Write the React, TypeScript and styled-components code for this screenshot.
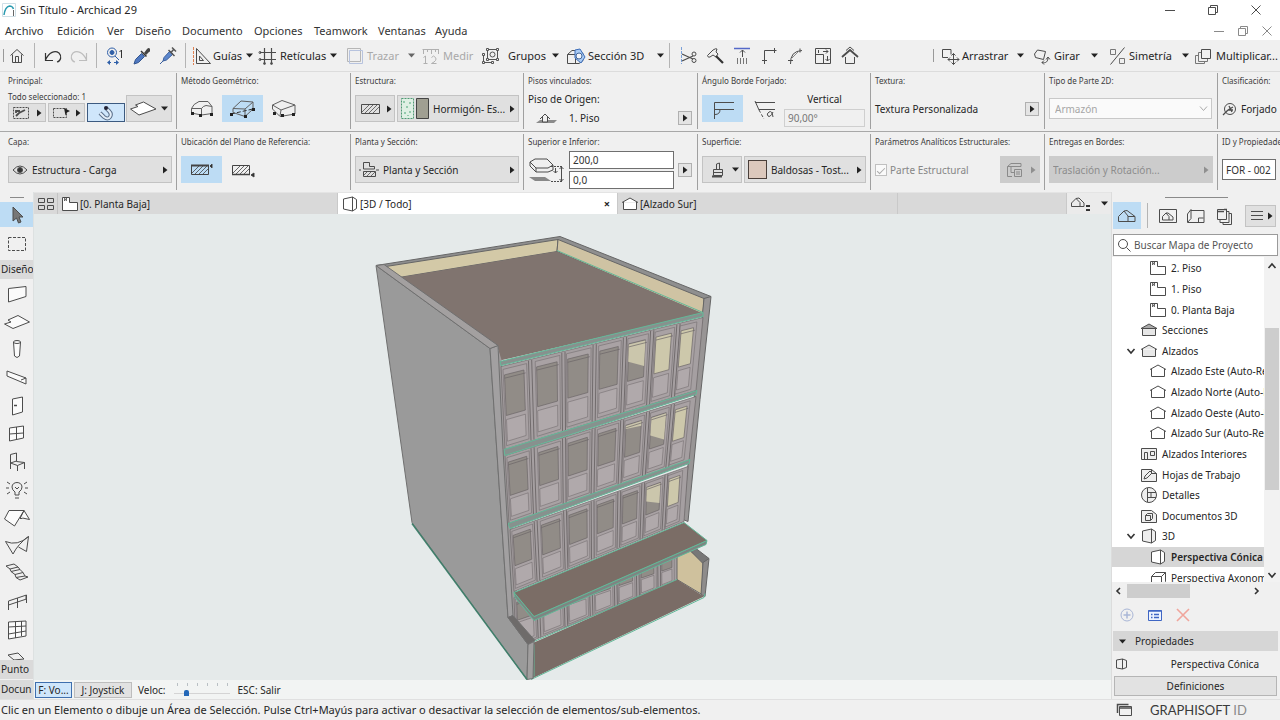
import React from 'react';
import styled, { createGlobalStyle, css } from 'styled-components';

const Global = createGlobalStyle`
  * { box-sizing: border-box; }
  body { margin: 0; background: #f0f0f0; color: #262626; font: 10px/14px "Noto Sans", "Open Sans", sans-serif; overflow: hidden; }
  button, input, select { font: inherit; color: inherit; margin: 0; }
  button { padding: 0; border: 0; background: none; display: flex; align-items: center; }
  svg { display: block; flex: none; }
  h1, h2, ul { margin: 0; padding: 0; font: inherit; list-style: none; }
`;

/* ---------- icons ---------- */
type IconProps = { w?: number; h?: number; color?: string; children: React.ReactNode };
const Icon = ({ w = 22, h = 20, color = '#4c4c4c', children }: IconProps) => (
  <svg width={w} height={h} viewBox={`0 0 ${w} ${h}`} fill="none" stroke={color} strokeWidth="1" aria-hidden="true">
    {children}
  </svg>
);
const Arrow = ({ color = '#222' }: { color?: string }) => (
  <svg width="5" height="8" viewBox="0 0 5 8" fill={color} aria-hidden="true"><path d="M0 0.5 4.5 4 0 7.5z" /></svg>
);
const Caret = ({ color = '#222' }: { color?: string }) => (
  <svg width="7" height="5" viewBox="0 0 7 5" fill={color} aria-hidden="true"><path d="M0 .5h7L3.500 4.500z" /></svg>
);

const HomeIcon = () => <Icon w={18}><path d="M2.500 9.500 9 3.500l6.500 6M4.500 8.500v8h9v-8M7.500 16.500v-6h3v6" /></Icon>;
const UndoIcon = () => <Icon w={20} color="#333"><path d="M2.500 7v7.500h7.500M2.500 14C6 6 12 4 16 7c3 3 2 8-2 9" strokeWidth="1.200" /></Icon>;
const RedoIcon = () => <Icon w={20} color="#bdbdbd"><path d="M17.500 7v7.500h-7.500M17.500 14C14 6 8 4 4 7c-3 3-2 8 2 9" strokeWidth="1.200" /></Icon>;
const FindIcon = () => (
  <Icon w={18} color="#2f5fa8"><circle cx="6" cy="6.500" r="4.500" /><circle cx="6" cy="6.500" r="2" fill="#2f5fa8" /><path d="m9 10 4 4M2 16.500h3M8 16.500h4" /><path d="M15.500 4v8M13.500 6l2-2" stroke="#333" /><path d="m4 14-3 2.500L4 19zM10 14l3 2.500-3 2.500z" fill="#2f5fa8" stroke="none" /></Icon>
);
const DropperIcon = ({ full }: { full?: boolean }) => (
  <Icon w={18}>
    {full
      ? <><path d="m1 18 3-3M4 15l1-3.500L11 5l3 3-6.500 6z" fill="#5d87cc" stroke="#3a5f9e" /><path d="m9.500 4 6 6M12 6.500l3-3.500M13 1.500l4 4" strokeWidth="1.500" stroke="#555" /></>
      : <><path d="m2 18 1.500-4.500 6-6 3 3-6 6z" fill="#4f78c0" stroke="#33558f" /><path d="m9 5 5.500 5.500" strokeWidth="1.500" stroke="#333" /><path d="m12 7 3-4q2-2 3 0t-1 3l-3 3z" fill="#444" stroke="none" /></>}
  </Icon>
);
const GuideIcon = () => (
  <Icon><path d="M6.500 2.500v15h14zM9.500 10v4.500h4z" /><path d="M3.500 1v18" stroke="#e08050" strokeDasharray="3 1" /></Icon>
);
const GridIcon = () => (
  <Icon><path d="M7.500 2v16M14.500 2v16M3 6.500h16M3 13.500h16" strokeWidth="1.200" /><circle cx="3" cy="6.500" r="1" /><circle cx="3" cy="13.500" r="1" /><circle cx="7.500" cy="17.500" r="1" /><circle cx="14.500" cy="17.500" r="1" /></Icon>
);
const TraceIcon = () => (
  <Icon color="#b6b6b6"><path d="M3.500 2.500h13v13h-13z" /><path d="M5.500 4.500h13v13h-13z" stroke="#b7c3de" /></Icon>
);
const MeasureIcon = () => <Icon color="#b0b0b0"><path d="M2.500 3.500h16M3.500 3v5M7.500 3v3M11.500 3v5M15.500 3v3M18.500 3v5M5.500 10v7M3.500 11.500l2-1.500M3.500 17.500h4M11.500 11.500q2-3 4 0t-4 6h5" /></Icon>;
const GroupIcon = () => (
  <Icon color="#555"><path d="M7.500 3.500h10v10h-10zM3.500 8.500v8h9" /><circle cx="12.500" cy="8.500" r="2.500" />{[[6, 2], [16, 2], [6, 12], [16, 12], [2, 7], [2, 15], [11, 15]].map(([x, y]) => <path key={`${x}-${y}`} d={`M${x}.500 ${y}.500h2v2h-2z`} fill="#f0f0f0" />)}</Icon>
);
const SectionIcon = () => (
  <Icon w={20}><path d="M1.500 8.500 6 4.500h7l4 3v7l-4 3H1.500zM1.500 8.500h8v9M9.500 8.500l4-4" /><path d="m9 4 5-1 5 8-4 6-6-5z" fill="#a9cbf5" stroke="#3d6db8" /><circle cx="13" cy="10" r="3" fill="#f4f6fa" stroke="#45689a" /></Icon>
);
const ScissorIcon = () => (
  <Icon w={18}><path d="M2.500 1v17" stroke="#7aa0d8" strokeDasharray="3 1" /><path d="m3 8 11 5M3 15l11-5" strokeWidth="1.200" /><circle cx="15" cy="8" r="2" /><circle cx="15" cy="14.500" r="2" /></Icon>
);
const SplitIcon = () => <Icon w={18}><path d="M1.500 9.500 7 4q3-2 4-1l-1 3 2 2-2 3-3-2-3 2q-2 1-2.500-1.500z" /><path d="m10 10 7 7" strokeWidth="2.200" stroke="#333" /></Icon>;
const AdjustIcon = () => <Icon w={18}><path d="M1 2.500h16" stroke="#5569c9" strokeWidth="1.500" /><path d="M9.500 4v7M7 6.500 9.500 4 12 6.500" /><path d="M4.500 12v6M7.500 12v6M10.500 12v6M13.500 12v6" stroke="#777" /></Icon>;
const TrimIcon = () => <Icon w={18}><path d="M4.500 18V4.500h12M2 14.500h5M14.500 2v5" /></Icon>;
const FilletIcon = () => <Icon w={18}><path d="M3.500 18Q3 5 15 4.500M1 14.500h5M13 2.500v4" /><path d="m5 12 7-7" stroke="#888" /></Icon>;
const ResizeIcon = () => <Icon w={18}><path d="M1.500 2.500h15v15h-15z" /><path d="M1.500 8.500h8v9M9 5.500h5M12 3.500l2 2-2 2M13.500 10v5M11.500 13l2 2 2-2" /><path d="M4.500 4v3" /></Icon>;
const HouseUpIcon = () => <Icon w={18}><path d="m1 11 8-7 8 7" strokeWidth="1.800" /><path d="M4.500 11v6.500h9V11" /><path d="M5 4.500 9 1l4 3.500" /></Icon>;
const DragIcon = () => <Icon><path d="M12 8.500V3.500H3.500v8H9" /><path d="M14.500 7.500v11M9 13.500h11M12.500 9.500l2-2 2 2M12.500 16.500l2 2 2-2M11 11.500l-2 2 2 2M18 11.500l2 2-2 2" /></Icon>;
const RotateIcon = () => <Icon><path d="m6.500 4 8 1.500-2 8-8-2-1-3.500zM11 16.500c4 1 6-1 6-5M15 13.500l2-2.500 2 2.500M13 14.500l-2 2 2 2" /></Icon>;
const MirrorIcon = () => <Icon><path d="M18.500 1.500 4.500 18.500" /><path d="M4.500 3.500h5v5h-5zM13.500 12.500h5v5h-5z" stroke="#777" /></Icon>;
const MultiplyIcon = () => <Icon><path d="M8.500 3.500h9v9h-9z" /><path d="M8 6.500H5.500v9h9V13M5 9.500H2.500v8h9V16" stroke="#777" /></Icon>;
const hatchLines = (x: number, y: number, w: number, h: number) =>
  Array.from({ length: Math.floor(w / 4) }, (_, i) => `M${x + i * 4} ${y + h}l${Math.min(h, w - i * 4)} ${-Math.min(h, w - i * 4)}`).join('');
const Hatch = ({ x, y, w, h }: { x: number; y: number; w: number; h: number }) => (
  <g><path d={`M${x}.500 ${y}.500h${w}v${h}h${-w}z`} /><path d={hatchLines(x, y, w, h)} strokeWidth=".8" /></g>
);

const SlabMethod = ({ kind }: { kind: 0 | 1 | 2 }) => (
  <Icon w={26} h={20} color="#606060">
    {kind === 0 && <path d="M2.500 14V9.500Q4 5 10 2.500h9l4 5v7L12.500 16V9.500Q14 7 17 6.500l6 1M2.500 9.500h10M2.500 14l10 2" />}
    {kind === 1 && <><path d="M3 9.500 11 2l12 1-8 7zM3 9.500v4l12 4 8-7.500V3M15 10v7.500" /><path d="M1 15 25 9.500" stroke="#333" strokeDasharray="4 2" /></>}
    {kind === 2 && <path d="M1.500 6 11 1.500 24 6l-14 5zM1.500 6v4L9 17.500 24 15V6M10 11l-1 6" />}
    {(kind === 1 ? [[1, 14], [15, 16], [23, 9]] : [[3, 13], [11, 15], [22, 14]]).map(([x, y]) => <rect key={x} x={x - 1} y={y} width="3" height="3" fill="#222" stroke="none" />)}
  </Icon>
);
const RefPlane = ({ low }: { low?: boolean }) => (
  <Icon w={24} h={16} color="#444"><Hatch x={1} y={3} w={17} h={9} />{low ? <><path d="M1 12.500h18" strokeWidth="1.500" /><path d="m23 11-3 2 3 2z" fill="#222" /></> : <><path d="M1 3.500h18" strokeWidth="2" /><path d="m22 2-2 2 2 2z" fill="#222" /></>}</Icon>
);
const EyeIcon = () => <Icon w={16} h={12}><path d="M1 6q7-8 14 0-7 8-14 0z" /><circle cx="8" cy="6" r="2.500" fill="#333" /></Icon>;
const PlanIcon = ({ w = 18, h = 16 }: { w?: number; h?: number }) => (
  <Icon w={w} h={h}><path d="M1.500 1.500h7v5h8v8h-15z" fill="#fff" /><path d="M3.500 2v3l2-3v3" strokeWidth=".8" /></Icon>
);
const ElevIcon = ({ fill = '#fff' }: { fill?: string }) => <Icon w={18} h={16}><path d="M1 6.500 9 2l8 4.500M2.500 6v7.500h13V6" fill={fill} /></Icon>;
const SectionTreeIcon = () => <Icon w={18} h={16}><path d="M1 6.500 9 2l8 4.500z" fill="#aaa" /><path d="M2.500 6.500h13v7h-13z" fill="#e6e6e6" /></Icon>;
const InteriorIcon = () => <Icon w={18} h={16}><path d="M1.500 2.500h15v11h-15z" fill="#eee" /><path d="M4.500 13V6.500h3V13M10.500 5.500h4v4h-4z" /></Icon>;
const WorksheetIcon = () => <Icon w={18} h={16}><path d="M1.500 2.500h10l5 4v8h-15z" fill="#eee" /><path d="m4 12 1-3 5-5 2 2-5 5zM11.500 2.500v4h5" /></Icon>;
const DetailIcon = () => <Icon w={18} h={16}><circle cx="9" cy="8" r="7.500" fill="#eee" /><path d="M7.500 1v14M7 5.500h9M7 10.500h9M11 5.500v5" /></Icon>;
const Doc3dIcon = () => <Icon w={18} h={16}><path d="M1.500 2.500h10l5 4v8h-15z" fill="#eee" /><path d="M5.500 7.500h5v5h-5zM5.500 7.500l2-2h5v5l-2 2" /></Icon>;
const PerspIcon = ({ fill = '#fff' }: { fill?: string }) => <Icon w={18} h={16}><path d="m2.500 3 9-2v14l-9-2zM11.500 1l4 2.500v9l-4 2.500" fill={fill} /></Icon>;
const AxonIcon = () => <Icon w={18} h={16}><path d="m2.500 6.500 4-4h10l-4 4zM2.500 6.500v9h10v-9M16.500 2.500v9l-4 4" fill="#fff" /></Icon>;
const MapIcon = () => <Icon w={20} h={18}><path d="M1.500 14.500V9.500L7 4l4 5v5.500zM7 4l3-.5 8 6v5h-7M11 9.500h7" /></Icon>;
const ViewMapIcon = () => <Icon w={20} h={18}><path d="M1.500 2.500h17v13h-17z" /><path d="M4.500 13V9.500L8 6l3 3.500V13zM8 6h2l5 4v3h-4" /></Icon>;
const LayoutIcon = () => <Icon w={20} h={18}><path d="M1.500 15.500 5 11.500v-9L1.500 7zM5 3.500h13v12H2M12.500 15v-4h5" /></Icon>;
const PublishIcon = () => <Icon w={18} h={18}><path d="M2.500 2.500h9v10h-9zM5 13v2.500h9v-11h-2M8 16v1.500h8.500v-11H14" /><path d="M2 4.500h7M9 2.500h3" strokeWidth="1.500" /></Icon>;

const toolPaths: { name: string; path: React.ReactNode }[] = [
  { name: 'Muro', path: <path d="M4.500 6.500 22 4.500v10L4.500 20z" fill="#fbfbfb" /> },
  { name: 'Forjado', path: <path d="m.5 14 6.500-2-3-2 10-4.500L25.500 12 9 18.500z" fill="#fbfbfb" /> },
  { name: 'Pilar', path: <><path d="m9.500 4 1 14q2.500 3 5 0l1-14" fill="#fbfbfb" /><ellipse cx="13" cy="4" rx="3.500" ry="1.500" /></> },
  { name: 'Viga', path: <path d="m3 5 19 7v6L3 10zM22 12l-5 2" fill="#fbfbfb" /> },
  { name: 'Puerta', path: <><path d="m8.500 5 10-2v15l-10 3z" fill="#fbfbfb" /><path d="M10 11.500h3" strokeWidth="1.500" /></> },
  { name: 'Ventana', path: <path d="m5.500 6 14-2v12l-14 3zM12.500 5v12M5.500 12l14-1" fill="#fbfbfb" /> },
  { name: 'Objeto', path: <path d="M6.500 13V4.500l6-1.500v8.500l8 1-7 3-7-2.500 6-2M6.500 13v6M13.500 15.500V21M20.500 12.500V19" /> },
  { name: 'Lámpara', path: <><path d="M11 17v-3q-3-2-3-5c0-6 10-6 10 0q0 3-3 5v3zM11 20h4M11 9l2 2 2-2" /><path d="m3 4 3 2M2 10h3M3 16l3-2M23 4l-3 2M24 10h-3M23 16l-3-2" /></> },
  { name: 'Cubierta', path: <path d="M.5 13 5 4.500h15l5.500 9-7-1.500M20 4.500 10.500 20 .5 13M20 4.500l-4 8 2.500 0" fill="#fbfbfb" /> },
  { name: 'Lámina', path: <path d="M1.500 7.500q12 5 23-5l-2 15-8-4.500M1.500 7.500 9 20Q14 10 24.500 2.500M1.500 7.500" /> },
  { name: 'Escalera', path: <path d="m2 4 8-2 4 3-8 2zM6 7l1 2.500 9-2L14 5M7 9.500l4 3 8-2-3-3M11 12.500l1 3 9-1.500-2-3.500M12 15.500l4 2.500 8-3-3-1" /> },
  { name: 'Barandilla', path: <path d="M4.500 20v-9l18-6v8M4.500 15l18-6M13.500 8v10M22 5v4" /> },
  { name: 'Muro Cortina', path: <path d="M4.500 4 22 3v15L4.500 21zM11.500 3.500v16.500M17.500 3v15M4.500 9 22 8M4.500 16 22 13" fill="#fbfbfb" /> },
  { name: 'Zona', path: <path d="m4 9 10-2 6 6-10 1z" /> },
];

/* ---------- title and menu ---------- */
const Window = styled.div`display: flex; flex-direction: column; height: 100vh; min-height: 500px;`;
const TitleBar = styled.header`display: flex; align-items: center; height: 20px; background: #fff; padding: 0 18px 0 2px; gap: 4px; font-size: 11px;`;
const MenuBar = styled.nav`display: flex; align-items: center; height: 20px; background: #fff; padding: 1px 7px 0 5px; font-size: 11px; color: #333;`;
const MenuItem = styled.button<{ $w: number }>`width: ${p => p.$w}px; height: 18px; white-space: nowrap;`;
const Spacer = styled.div`flex: 1;`;
const WinControls = styled.div<{ $gap: number; $dim?: boolean }>`display: flex; gap: ${p => p.$gap}px; opacity: ${p => (p.$dim ? 0.65 : 1)};`;
const WindowButtons = ({ gap, dim }: { gap: number; dim?: boolean }) => (
  <WinControls $gap={gap} $dim={dim}>
    <button aria-label="Minimizar"><Icon w={12} h={12}><path d="M1 6.500h10" /></Icon></button>
    <button aria-label="Restaurar"><Icon w={12} h={12}><path d="M1.500 3.500h7v7h-7zM3.500 3V1.500h7v7H9" /></Icon></button>
    <button aria-label="Cerrar"><Icon w={12} h={12}><path d="m1.500 1.500 9 9M10.500 1.500l-9 9" /></Icon></button>
  </WinControls>
);

/* ---------- toolbar ---------- */
const Toolbar = styled.div`display: flex; align-items: center; height: 32px; padding-left: 3px; border-bottom: 1px solid #dcdcdc; overflow: hidden; white-space: nowrap;`;
const Handle = styled.i`width: 1px; height: 13px; background: #999; flex: none;`;
const Sep = styled.i<{ $m?: number }>`width: 1px; height: 25px; background: #b4b4b4; margin: 0 ${p => p.$m ?? 4}px; flex: none;`;
const IconTool = styled.button<{ $w?: number }>`width: ${p => p.$w ?? 27}px; height: 24px; justify-content: center; flex: none;`;
const LabelTool = styled.button<{ $w: number; $gap?: number; $left?: number }>`
  width: ${p => p.$w}px; height: 24px; flex: none; margin-left: ${p => p.$left ?? 3}px; font-size: 11px;
  > span { padding-left: ${p => p.$gap ?? 1}px; flex: 1; text-align: left; }
  > svg:last-child { margin-right: 1px; }
  &:disabled { color: #a8a8a8; }
`;

/* ---------- info box ---------- */
const InfoBox = styled.section`display: flex; flex-direction: column; gap: 2px; padding-top: 1px; overflow: hidden; flex: none;`;
const InfoRow = styled.div`
  display: grid; grid-template-columns: 176fr 174fr 173fr 174fr 173fr 174fr 173fr 63fr; height: 59px; border-bottom: 1px solid #a8a8a8;
  &:last-child { border-bottom: 0; height: 58px; }
`;
const Cell = styled.section`
  min-width: 0; overflow: hidden; padding: 2px 4px 0; margin-bottom: 2px; border-left: 1px solid #a0a0a0;
  &:first-child { border-left: 0; padding-left: 8px; }
`;
const Caption = styled.h2`display: block; margin: 0; font-size: 8px; line-height: 12px; color: #3c3c3c; white-space: nowrap;`;
const Body = styled.div<{ $end?: boolean; $gap?: number }>`
  display: flex; height: 43px; align-items: ${p => (p.$end ? 'flex-end' : 'center')}; gap: ${p => p.$gap ?? 2}px; padding-bottom: ${p => (p.$end ? 8 : 0)}px; white-space: nowrap;
`;
const Toggle = styled.button<{ $on?: boolean }>`width: 41px; height: 27px; justify-content: center; flex: none; background: ${p => (p.$on ? '#bddcf4' : 'transparent')};`;
const Panel = styled.button<{ $w?: number; $h?: number; $on?: boolean }>`
  ${p => (p.$w ? css`width: ${p.$w}px; flex: none;` : css`flex: 1; min-width: 0;`)}
  height: ${p => p.$h ?? 27}px; padding: 0 3px; gap: 4px; background: #e0e0e0; border: 1px solid #c3c3c3; justify-content: space-between;
  > span { flex: 1; text-align: left; overflow: hidden; text-overflow: ellipsis; white-space: nowrap; }
  ${p => p.$on && css`background: #cfe6fb; border-color: #3c5a80; justify-content: center;`}
  &:disabled { background: #cccccc; border-color: #ccc; color: #8c8c8c; }
`;
const MiniButton = styled.button`width: 14px; height: 14px; flex: none; justify-content: center; background: #e4e4e4; border: 1px solid #b0b0b0; margin-right: 1px;`;
const Stack = styled.div<{ $gap?: number }>`display: flex; flex-direction: column; gap: ${p => p.$gap ?? 0}px; flex: 1; min-width: 0;`;
const Line = styled.div<{ $gap?: number; $pad?: number }>`display: flex; align-items: center; gap: ${p => p.$gap ?? 2}px; padding-left: ${p => p.$pad ?? 0}px;`;
const Field = styled.input<{ $dim?: boolean }>`
  width: 100%; min-width: 0; height: 18px; padding: 0 3px; border: 1px solid ${p => (p.$dim ? '#cfcfcf' : '#6f6f6f')}; background: ${p => (p.$dim ? '#f0f0f0' : '#fff')}; color: ${p => (p.$dim ? '#777' : '#333')}; border-radius: 0;
`;
const IdField = styled(Field)`height: 21px;`;
const Swatch = styled.i<{ $c: string }>`width: 19px; height: 19px; flex: none; background: ${p => p.$c}; border: 1px solid #4a3f3a;`;
const Select = styled.select`
  appearance: none; flex: 1; min-width: 0; height: 21px; padding: 0 5px; border: 1px solid #c8c8c8; border-radius: 0; color: #a6a6a6; opacity: 1; background: #fafafa;
`;
const SelectWrap = styled.div`
  display: flex; flex: 1; position: relative; margin-right: 1px;
  > svg { position: absolute; right: 4px; top: 7px; }
`;
const Check = styled.input`
  appearance: none; width: 12px; height: 12px; border: 1px solid #c0c0c0; background: #fafafa; display: grid; place-items: center; flex: none;
  &:checked::after { content: ""; width: 7px; height: 3px; border: solid #aaa; border-width: 0 0 1px 1px; transform: rotate(-45deg); }
`;
const CheckLabel = styled.label`display: flex; align-items: center; gap: 3px; color: #868686; flex: 1;`;
const AngleValue = styled.label`display: flex; flex-direction: column; flex: 1; min-width: 0; gap: 3px; text-align: center; margin-right: 1px; padding-top: 2px;`;

/* ---------- workspace ---------- */
const Workspace = styled.div`display: flex; flex: 1; min-height: 0;`;
const Toolbox = styled.aside`width: 34px; flex: none; display: flex; flex-direction: column; border-right: 1px solid #dde1e1; overflow: hidden;`;
const Grip = styled.i<{ $w: number }>`display: block; width: ${p => p.$w}px; height: 1px; background: #8a8a8a; margin: 5px auto 4px; flex: none;`;
const Tool = styled.button<{ $on?: boolean; $h?: number }>`height: ${p => p.$h ?? 28}px; flex: none; justify-content: center; background: ${p => (p.$on ? '#bddcf4' : 'transparent')};`;
const ToolGroup = styled.h2`height: 19px; flex: none; padding-left: 1px; line-height: 19px; background: #dadada; margin-bottom: 1px; overflow: hidden; white-space: nowrap; font-size: 10px; &:last-child { margin-bottom: 0; }`;
const ToolList = styled.div`flex: 1; min-height: 0; overflow: hidden; display: flex; flex-direction: column;`;
const Center = styled.main`flex: 1; min-width: 0; display: flex; flex-direction: column;`;
const Tabs = styled.div`display: flex; height: 22px; flex: none; background: #d9d9d9; align-items: stretch; border-top: 1px solid #e4e4e4;`;
const Tab = styled.button<{ $on?: boolean; $grow?: number }>`
  flex: ${p => p.$grow ?? 281} 1 0; min-width: 0; padding: 0 7px 0 3px; gap: 1px; background: ${p => (p.$on ? '#fff' : 'transparent')}; border-right: 1px solid #c9c9c9; overflow: hidden; white-space: nowrap;
  > b { margin-left: auto; font-size: 11px; }
`;
const TabOverview = styled.button`width: 24px; flex: none; justify-content: center; border-right: 1px solid #c4c4c4;`;
const TabEnd = styled.button`width: 44px; flex: none; background: #ebebeb; justify-content: center; gap: 9px;`;
const Canvas = styled.div`
  flex: 1; min-height: 0; background: #e5eaea; overflow: hidden;
  > svg { width: 100%; height: 100%; }
`;
const NavBar = styled.div`display: flex; align-items: center; height: 19px; flex: none; background: #f2f4f3; padding: 0 1px; gap: 2px; > output { padding-left: 6px; }`;
const NavButton = styled.button<{ $w: number; $on?: boolean }>`
  width: ${p => p.$w}px; height: 16px; justify-content: center; border: 1px solid ${p => (p.$on ? '#3f6fae' : '#bdbdbd')}; background: ${p => (p.$on ? '#cfe6fb' : '#e2e2e2')};
`;
const Speed = styled.label`display: flex; align-items: center; gap: 8px; padding-left: 4px;`;
const Range = styled.input`
  appearance: none; width: 56px; height: 14px; background: repeating-linear-gradient(90deg, #b9c0c4 0 1px, transparent 1px 10px) 3px 0 / 52px 3px no-repeat, linear-gradient(#d4d4d4, #d4d4d4) 0 10px / 100% 1px no-repeat;
  &::-webkit-slider-thumb { appearance: none; width: 5px; height: 6px; background: #2468b8; border-radius: 2px 2px 0 0; margin-top: 6px; }
`;

/* ---------- navigator ---------- */
const Navigator = styled.aside`width: 169px; flex: none; display: flex; flex-direction: column; border-left: 1px solid #dcdcdc; min-height: 0;`;
const NavTools = styled.div`display: flex; align-items: center; height: 27px; padding: 0 4px 0 1px; gap: 0; flex: none;`;
const NavTool = styled.button<{ $on?: boolean }>`width: 28px; height: 27px; justify-content: center; background: ${p => (p.$on ? '#bddcf4' : 'transparent')};`;
const NavSep = styled(Sep)`margin: 0 6px;`;
const Search = styled.label`
  display: flex; align-items: center; gap: 3px; height: 22px; margin: 5px 2px 1px 1px; border: 1px solid #9a9a9a; background: #fff; padding: 0 3px; flex: none;
  > input { border: 0; outline: 0; width: 100%; min-width: 0; padding: 0; background: none; }
  > input::placeholder { color: #555; opacity: 1; }
`;
const TreeArea = styled.div`display: flex; flex: 1; min-height: 0;`;
const TreeView = styled.ul`display: grid; grid-auto-rows: 1fr; height: 331px; padding-top: 1px;`;
const TreeClip = styled.div`flex: 1; min-width: 0; overflow: hidden; background: #fff;`;
const Node = styled.li<{ $level: number; $on?: boolean }>`
  display: flex; align-items: center; gap: 4px; padding-left: ${p => 14 + p.$level * 9}px; white-space: nowrap; overflow: hidden;
  ${p => p.$on && css`background: #d6d6d6; font-weight: 600;`}
`;
const Twist = styled.i`width: 10px; flex: none;`;
const VScroll = styled.div`width: 16px; flex: none; display: flex; flex-direction: column; align-items: center; padding: 4px 0 2px; background: #f2f2f2;`;
const VThumb = styled.i`flex: 163 1 0; width: 14px; background: #cdcdcd;`;
const Fill = styled.i<{ $n: number }>`flex: ${p => p.$n} 1 0;`;
const HScroll = styled.div`display: flex; align-items: center; height: 17px; padding: 0 19px 0 2px; gap: 3px; flex: none;`;
const HThumb = styled.i`width: 63px; height: 14px; background: #cdcdcd;`;
const Actions = styled.div`display: flex; gap: 14px; padding: 0 8px; height: 32px; align-items: center; flex: none;`;
const PropHead = styled.button`height: 20px; margin: 0 2px 0 1px; background: #d6d6d6; padding-left: 6px; gap: 9px; flex: none; font-size: 10px;`;
const PropRow = styled.div`display: flex; align-items: center; height: 25px; padding: 0 21px 0 3px; justify-content: space-between; flex: none;`;
const DefButton = styled.button`height: 20px; margin: 0 3px 3px 2px; justify-content: center; background: #e2e2e2; border: 1px solid #b5b5b5; flex: none;`;

const Status = styled.footer`display: flex; height: 21px; flex: none; align-items: center; font-size: 11px; border-top: 1px solid #e0e0e0; > p { margin: 0; flex: 1; padding-left: 1px; white-space: nowrap; overflow: hidden; }`;
const Brand = styled.div`width: 169px; display: flex; align-items: center; padding-left: 4px; gap: 17px; font: 13px "Lato", sans-serif; color: #3a3a3a; > span > span { color: #8a8a8a; }`;

/* ---------- building model ---------- */
type Pt = [number, number];
type Quad = { tl: Pt; tr: Pt; bl: Pt; br: Pt };
const mix = (a: Pt, b: Pt, t: number): Pt => [a[0] + (b[0] - a[0]) * t, a[1] + (b[1] - a[1]) * t];
const at = (q: Quad, u: number, v: number): Pt => mix(mix(q.tl, q.tr, u), mix(q.bl, q.br, u), v);
const pts = (list: Pt[]) => list.map(p => p.map(n => n.toFixed(1)).join(',')).join(' ');
const patch = (q: Quad, u0: number, v0: number, u1: number, v1: number) => pts([at(q, u0, v0), at(q, u1, v0), at(q, u1, v1), at(q, u0, v1)]);

const bays: [number, number][] = [[0.015, 0.12], [0.175, 0.285], [0.33, 0.44], [0.49, 0.59], [0.635, 0.725], [0.77, 0.855], [0.895, 0.965]];
const EDGE = '#6b6567';
/* `lit` gives, per bay, how much of the glass shows the bright inner wall (0 to 1). */
const Storey = ({ q, lit, sill = 0.63 }: { q: Quad; lit: number[]; sill?: number }) => (
  <g stroke={EDGE} strokeWidth=".7">
    <polygon points={patch(q, 0, 0, 1, 1)} fill="#a59fa1" />
    {bays.map(([a, b], i) => (
      <g key={a}>
        <polygon points={patch(q, a - 0.006, 0.04, b + 0.006, 0.96)} fill="#a9a2a4" strokeWidth=".5" />
        <polygon points={patch(q, a, 0.11, b - 0.008, sill - 0.03)} fill={lit[i] === 1 ? '#cdc8ab' : '#918c87'} />
        {lit[i] > 0 && lit[i] < 1 && <polygon points={pts([at(q, a, 0.12), at(q, b - 0.008, 0.12), at(q, b - 0.008, 0.12 + lit[i] * 0.48), at(q, a, 0.12 + lit[i] * 0.32)])} fill="#cbc6ac" stroke="none" />}
        <polygon points={patch(q, a, sill + 0.02, b - 0.008, 0.91)} fill="#b0a9ab" strokeWidth=".5" />
        <polyline fill="none" points={pts([at(q, a, 0.15), at(q, b, 0.15)])} />
        {i < 6 && [0.016, 0.032].map(d => <polyline key={d} fill="none" points={pts([at(q, b + d, 0.01), at(q, b + d, 0.99)])} strokeWidth=".9" />)}
      </g>
    ))}
  </g>
);
const G = '#62b898';
const Building = () => (
  <svg viewBox="34 214 1077 467" preserveAspectRatio="xMidYMid slice" strokeLinejoin="round" role="img" aria-label="Vista 3D del edificio">
    <g stroke="#666" strokeWidth="1">
      <polygon points="376,266 560,237 711,297 704,302 497,350" fill="#8f8f8f" />
      <polygon points="386,267 558,240 557,252 399,278" fill="#d3c9a7" />
      <polygon points="558,240 704,299 703,315 557,252" fill="#cfc3a3" />
      <polygon points="399,278 557,252 703,314 500,361 498,346" fill="#80746f" stroke="none" />
      <polygon points="704,299 711,297 700,400 688,522 683,520 694,400" fill="#989595" />
    </g>
    <polygon points="497,346 502,362 520,650 506,617" fill="#9f9b9c" />
    <Storey q={{ tl: [501, 367], tr: [703, 318], bl: [505, 450], br: [696, 391] }} lit={[0, 0, 0, 0, 0.7, 1, 1]} />
    <Storey q={{ tl: [505, 456], tr: [696, 397], bl: [509, 524], br: [689, 461] }} lit={[0, 0, 0, 0, 0.15, 0.85, 1]} />
    <Storey q={{ tl: [510, 530], tr: [688, 467], bl: [514, 592], br: [684, 522] }} lit={[0, 0, 0, 0, 0, 0.75, 1]} />
    <g fill="#87918e" stroke={G} strokeWidth="1">
      <polygon points="500,362 703,313 703,317 501,366" />
      <polygon points="504,450 697,391 696,395 505,456" />
      <polygon points="508,524 690,460 689,464 510,529" />
    </g>
    <path d="m557 251 146 62" stroke={G} fill="none" />
    <Storey sill={0.5} q={{ tl: [514, 598], tr: [679, 552], bl: [516, 648], br: [679, 581] }} lit={[0, 0, 0, 0, 0, 0, 0]} />
    <g stroke="#666" strokeWidth="1">
      <polygon points="677,557 690,551 703,562 702,595 677,580" fill="#cfc19d" />
      <polygon points="688,549 696,549 709,559 703,564" fill="#777" />
      <polygon points="703,563 709,559 705,597 701,595" fill="#8e8c8b" />
      <polygon points="534,643 677,580 704,597 532,679" fill="#7a6c66" stroke="none" />
    </g>
    <path d="m534 642 143-62M531 680l173-82 1-4M534 645v32" stroke={G} fill="none" />
    <polygon points="514,593 534,617 707,541 706,545 534,621 515,598" fill="#7d8582" stroke={G} />
    <polygon points="514,593 684,523 707,541 534,617" fill="#7b6d66" stroke={G} />
    <g stroke="#707070" strokeWidth="1">
      <polygon points="376,266 490,349 508,618 528,645 527,680 412,523" fill="#9a9a9a" />
      <polygon points="490,349 498,346 503,450 513,616 508,618" fill="#a2a0a1" />
      <polygon points="376,266 384,265 498,346 490,349" fill="#a3a0a0" />
      <polygon points="508,618 513,616 535,641 528,645" fill="#6e6b6a" />
      <polygon points="528,645 534,642 533,679 527,680" fill="#a19f9f" />
    </g>
    <path d="m412 524 115 156" stroke="#3f7f6b" fill="none" strokeWidth="1.500" />
  </svg>
);

const menus: [string, number][] = [['Archivo', 52], ['Edición', 50], ['Ver', 28], ['Diseño', 47], ['Documento', 72], ['Opciones', 60], ['Teamwork', 64], ['Ventanas', 57], ['Ayuda', 40]];
const quickTools: [string, React.FC][] = [['Recortar', ScissorIcon], ['Dividir', SplitIcon], ['Ajustar', AdjustIcon], ['Intersecar', TrimIcon], ['Empalme', FilletIcon], ['Redimensionar', ResizeIcon], ['Modificar cubierta', HouseUpIcon]];

type TreeItem = { text: string; level: number; icon: React.ReactNode; open?: boolean; on?: boolean };
const tree: TreeItem[] = [
  { text: '2. Piso', level: 2, icon: <PlanIcon /> },
  { text: '1. Piso', level: 2, icon: <PlanIcon /> },
  { text: '0. Planta Baja', level: 2, icon: <PlanIcon /> },
  { text: 'Secciones', level: 1, icon: <SectionTreeIcon /> },
  { text: 'Alzados', level: 1, icon: <ElevIcon fill="#e8e8e8" />, open: true },
  { text: 'Alzado Este (Auto-Reconstruir)', level: 2, icon: <ElevIcon /> },
  { text: 'Alzado Norte (Auto-Reconstruir)', level: 2, icon: <ElevIcon /> },
  { text: 'Alzado Oeste (Auto-Reconstruir)', level: 2, icon: <ElevIcon /> },
  { text: 'Alzado Sur (Auto-Reconstruir)', level: 2, icon: <ElevIcon /> },
  { text: 'Alzados Interiores', level: 1, icon: <InteriorIcon /> },
  { text: 'Hojas de Trabajo', level: 1, icon: <WorksheetIcon /> },
  { text: 'Detalles', level: 1, icon: <DetailIcon /> },
  { text: 'Documentos 3D', level: 1, icon: <Doc3dIcon /> },
  { text: '3D', level: 1, icon: <PerspIcon fill="#eee" />, open: true },
  { text: 'Perspectiva Cónica', level: 2, icon: <PerspIcon />, on: true },
  { text: 'Perspectiva Axonométrica', level: 2, icon: <AxonIcon /> },
];
const Chevron = ({ d }: { d: string }) => <Icon w={10} h={10} color="#333"><path d={d} strokeWidth="1.600" /></Icon>;

export default function App() {
  return (
    <Window>
      <Global />
      <TitleBar>
        <Icon w={14} h={14}><path d="M.5.500h13v13H.5z" stroke="#cfdfe6" /><path d="M2 12Q3 4 7.500 3q3 0 4 3" stroke="#2b9bb0" strokeWidth="1.500" /><path d="M11.500 7v6" stroke="#666" /></Icon>
        <h1>Sin Título - Archicad 29</h1>
        <Spacer />
        <WindowButtons gap={31} />
      </TitleBar>
      <MenuBar>
        {menus.map(([m, w]) => <MenuItem key={m} $w={w}>{m}</MenuItem>)}
        <Spacer />
        <WindowButtons gap={12} dim />
      </MenuBar>
      <Toolbar>
        <Handle />
        <IconTool $w={25} aria-label="Inicio"><HomeIcon /></IconTool>
        <Sep $m={5} />
        <IconTool $w={26} aria-label="Deshacer"><UndoIcon /></IconTool>
        <IconTool $w={26} aria-label="Rehacer" disabled><RedoIcon /></IconTool>
        <Sep />
        <IconTool aria-label="Buscar y seleccionar"><FindIcon /></IconTool>
        <IconTool $w={26} aria-label="Tomar parámetros"><DropperIcon /></IconTool>
        <IconTool aria-label="Inyectar parámetros"><DropperIcon full /></IconTool>
        <Sep />
        <LabelTool $w={64} $left={0}><GuideIcon /><span>Guías</span><Caret /></LabelTool>
        <LabelTool $w={81}><GridIcon /><span>Retículas</span><Caret /></LabelTool>
        <LabelTool $w={72} $left={6} disabled><TraceIcon /><span>Trazar</span><Caret color="#666" /></LabelTool>
        <LabelTool $w={56} $left={4} disabled><MeasureIcon /><span>Medir</span></LabelTool>
        <LabelTool $w={80} $gap={6} $left={4}><GroupIcon /><span>Grupos</span><Caret /></LabelTool>
        <LabelTool $w={99} $gap={2} $left={6}><SectionIcon /><span>Sección 3D</span><Caret /></LabelTool>
        <Sep />
        {quickTools.map(([name, I]) => <IconTool key={name} aria-label={name}><I /></IconTool>)}
        <Spacer />
        <Handle />
        <LabelTool $w={86} $left={5}><DragIcon /><span>Arrastrar</span><Caret /></LabelTool>
        <LabelTool $w={68} $left={6}><RotateIcon /><span>Girar</span><Caret /></LabelTool>
        <LabelTool $w={84} $left={7}><MirrorIcon /><span>Simetría</span><Caret /></LabelTool>
        <LabelTool $w={87}><MultiplyIcon /><span>Multiplicar...</span></LabelTool>
      </Toolbar>

      <InfoBox>
        <InfoRow>
          <Cell>
            <Caption>Principal:</Caption>
            <Body $end>
              <Stack>
                <Caption as="p">Todo seleccionado: 1</Caption>
                <Line>
                  <Panel $w={38} $h={19} aria-label="Selección"><Icon w={18} h={14}><path d="M1.500 1.500h15v11h-15z" strokeDasharray="2 1" /><path d="m4 10 3-3 6-3M4 5h4M4 4v3" strokeWidth="1.800" /></Icon><Arrow /></Panel>
                  <Panel $w={37} $h={19} aria-label="Área"><Icon w={20} h={14}><path d="M1.500 2.500h13v9h-13z" strokeDasharray="2 1" /><path d="m12 2 6 3-3 1.500-1.500 3z" fill="#222" stroke="none" /></Icon><Arrow /></Panel>
                  <Panel $w={38} $h={19} $on aria-label="Imán"><Icon w={18} h={16}><path d="m3 8 4 4q4 3 6 0t-1-6L9 3" strokeWidth="4" stroke="#5b6f8a" /><path d="m3 8 4 4q4 3 6 0t-1-6L9 3" strokeWidth="2" stroke="#e4eef8" /><circle cx="9" cy="3" r="2" fill="#223" stroke="none" /></Icon></Panel>
                </Line>
              </Stack>
              <Panel $w={46} aria-label="Forjado"><Icon w={27} h={18}><path d="m.5 9 7.500-2.500L5.500 5l8-3L26 9 9 15z" fill="#fff" /></Icon><Caret /></Panel>
            </Body>
          </Cell>
          <Cell>
            <Caption>Método Geométrico:</Caption>
            <Body $gap={0}>
              <Toggle aria-label="Polígono"><SlabMethod kind={0} /></Toggle>
              <Toggle $on aria-label="Rectángulo"><SlabMethod kind={1} /></Toggle>
              <Toggle aria-label="Rectángulo rotado"><SlabMethod kind={2} /></Toggle>
            </Body>
          </Cell>
          <Cell>
            <Caption>Estructura:</Caption>
            <Body>
              <Panel $w={40} aria-label="Trama"><Icon w={24} h={14}><Hatch x={2} y={2} w={18} h={9} /></Icon><Arrow /></Panel>
              <Panel>
                <Icon w={28} h={21}><path d="M.5.500h12v20H.5z" fill="#dff0e4" stroke="#4f9a74" strokeDasharray="2 1" /><path d="M3 3v2M6 8v2M9 4v2M4 14v2M9 13v2M7 17v1" stroke="#4aa577" /><path d="M15.500.500h12v20h-12z" fill="#a09f92" stroke="#444" /></Icon>
                <span>Hormigón- Es...</span><Arrow />
              </Panel>
            </Body>
          </Cell>
          <Cell>
            <Caption>Pisos vinculados:</Caption>
            <Body>
              <Stack $gap={5}>
                <span>Piso de Origen:</span>
                <Line $pad={8} $gap={12}><Icon w={21} h={12}><path d="M0 11h18l3-3H4z" fill="#8b8b8b" stroke="none" /><path d="m4 7 5-5 5 5M6.500 5v5h5V5" fill="#f0f0f0" /></Icon><span>1. Piso</span><Spacer /><MiniButton aria-label="Elegir piso"><Arrow /></MiniButton></Line>
              </Stack>
            </Body>
          </Cell>
          <Cell>
            <Caption>Ángulo Borde Forjado:</Caption>
            <Body $gap={0}>
              <Toggle $on aria-label="Borde vertical"><Icon w={24} h={22}><path d="M3.500 21V4.500H23M3.500 11.500H23M9 11.500q0 5-5 5" /></Icon></Toggle>
              <Toggle aria-label="Borde inclinado"><Icon w={24} h={22}><path d="M3 4.500h20M7 11.500h16M3 3l4 9" /><path d="m7 12 5 9" strokeDasharray="3 2" /><path d="M21 14q-3 6-5 4t1-4 4 5" /></Icon></Toggle>
              <AngleValue>Vertical<Field $dim defaultValue="90,00°" readOnly /></AngleValue>
            </Body>
          </Cell>
          <Cell>
            <Caption>Textura:</Caption>
            <Body><span>Textura Personalizada</span><Spacer /><MiniButton aria-label="Elegir textura"><Arrow /></MiniButton></Body>
          </Cell>
          <Cell>
            <Caption as="label" htmlFor="part">Tipo de Parte 2D:</Caption>
            <Body><SelectWrap><Select id="part" disabled><option>Armazón</option></Select><Icon w={9} h={7} color="#aaa"><path d="m1 1.500 3.500 4 3.500-4" /></Icon></SelectWrap></Body>
          </Cell>
          <Cell>
            <Caption>Clasificación:</Caption>
            <Body $gap={5}><Icon w={14} h={14}><circle cx="8" cy="7" r="5.500" /><path d="m1 13 5-5M6 8l5-3M7 4l3 6M6 8h5" strokeWidth="1.300" /></Icon><span>Forjado</span></Body>
          </Cell>
        </InfoRow>
        <InfoRow>
          <Cell>
            <Caption>Capa:</Caption>
            <Body><Panel><EyeIcon /><span>Estructura - Carga</span><Arrow /></Panel></Body>
          </Cell>
          <Cell>
            <Caption>Ubicación del Plano de Referencia:</Caption>
            <Body $gap={0}><Toggle $on aria-label="Arriba"><RefPlane /></Toggle><Toggle aria-label="Abajo"><RefPlane low /></Toggle></Body>
          </Cell>
          <Cell>
            <Caption>Planta y Sección:</Caption>
            <Body><Panel><Icon w={20} h={18}><path d="M4.500 8V1.500h6v4h5V8zM0 9h2M17 9h3" /><Hatch x={4} y={10} w={12} h={5} /></Icon><span>Planta y Sección</span><Arrow /></Panel></Body>
          </Cell>
          <Cell>
            <Caption>Superior e Inferior:</Caption>
            <Body $gap={4}>
              <Icon w={37} h={26}><path d="m2 5 5-3h12l6 6v5l-5 2H8L2 9zM2 5l6 6h12l5-3M8 11v4" /><path d="M1 20h16l6 4H7z" fill="#888" stroke="none" /><path d="M23 9.500h12M23 24.500h12" strokeDasharray="2 1" /><path d="M27.500 11v5M25.500 14l2 2 2-2M33.500 10v14M31.500 12l2-2 2 2M31.500 22l2 2 2-2" /></Icon>
              <Stack $gap={2}><Field aria-label="Superior" defaultValue="200,0" /><Field aria-label="Inferior" defaultValue="0,0" /></Stack>
              <MiniButton aria-label="Más cotas"><Arrow /></MiniButton>
            </Body>
          </Cell>
          <Cell>
            <Caption>Superficie:</Caption>
            <Body>
              <Panel $w={40} aria-label="Pincel"><Icon w={22} h={16}><path d="M7.500 7.500h9v6h-9zM10.500 7V2l3-1v6M7 10.500h9" /><path d="M6 14.500h10" strokeWidth="2" /></Icon><Caret /></Panel>
              <Panel><Swatch $c="#dcc8bc" /><span>Baldosas - Tost...</span><Arrow /></Panel>
            </Body>
          </Cell>
          <Cell>
            <Caption>Parámetros Analíticos Estructurales:</Caption>
            <Body>
              <CheckLabel><Check type="checkbox" defaultChecked disabled />Parte Estructural</CheckLabel>
              <Panel $w={40} disabled aria-label="Analítico"><Icon w={20} h={18} color="#8a8a8a"><path d="M3.500 5.500 7 2.500h10v3H3.500v10H8M7 5.500v6h3M10.500 8.500h7v7h-7zM13 10v4M15 10v4" /></Icon><Arrow color="#8f8f8f" /></Panel>
            </Body>
          </Cell>
          <Cell>
            <Caption>Entregas en Bordes:</Caption>
            <Body><Panel disabled><span>Traslación y Rotación...</span><Arrow color="#8f8f8f" /></Panel></Body>
          </Cell>
          <Cell>
            <Caption as="label" htmlFor="elid">ID y Propiedades:</Caption>
            <Body><IdField id="elid" defaultValue="FOR - 002" /></Body>
          </Cell>
        </InfoRow>
      </InfoBox>

      <Workspace>
        <Toolbox>
          <Grip $w={14} />
          <Tool $on $h={25} aria-label="Flecha"><Icon w={18} h={20}><path d="M5 2v14l3.500-3 2 5 2.500-1-2-5h4z" fill="#777" /></Icon></Tool>
          <Tool $h={33} aria-label="Área de Selección"><Icon w={20} h={16}><path d="M1.500 1.500h17v13h-17z" strokeDasharray="3 1.500" /></Icon></Tool>
          <ToolGroup>Diseño</ToolGroup>
          <ToolList>
            {toolPaths.map(t => <Tool key={t.name} aria-label={t.name}><Icon w={26} h={24}>{t.path}</Icon></Tool>)}
          </ToolList>
          <ToolGroup>Punto</ToolGroup>
          <ToolGroup>Docun</ToolGroup>
        </Toolbox>
        <Center>
          <Tabs role="tablist">
            <TabOverview aria-label="Resumen de pestañas"><Icon w={18} h={14}><path d="M1.500 1.500h6v4h-6zM10.500 1.500h6v4h-6zM1.500 8.500h6v4h-6zM10.500 8.500h6v4h-6z" /></Icon></TabOverview>
            <Tab role="tab"><PlanIcon />[0. Planta Baja]</Tab>
            <Tab role="tab" $on aria-selected="true"><PerspIcon />[3D / Todo]<b>×</b></Tab>
            <Tab role="tab"><ElevIcon />[Alzado Sur]</Tab>
            <Tab role="tab" $grow={165} aria-label="Vacía" />
            <TabEnd aria-label="Opciones de pestañas"><Icon w={22} h={16}><path d="M1.500 10.500V7L6 2.500l4 4v4zM6 2.500l3-.5 5 5v3.500H10" /><path d="M16 9h4v2h-4zM16 13h4v2h-4z" fill="#333" stroke="none" /></Icon><Caret /></TabEnd>
          </Tabs>
          <Canvas><Building /></Canvas>
          <NavBar>
            <NavButton $on $w={37}>F: Vo...</NavButton>
            <NavButton $w={58}>J: Joystick</NavButton>
            <Speed>Veloc:<Range type="range" min={0} max={10} defaultValue={2} /></Speed>
            <output>ESC: Salir</output>
          </NavBar>
        </Center>
        <Navigator>
          <Grip $w={63} />
          <NavTools>
            <NavTool $on aria-label="Mapa de Proyecto"><MapIcon /></NavTool>
            <NavSep />
            <NavTool aria-label="Mapa de Vistas"><ViewMapIcon /></NavTool>
            <NavTool aria-label="Libro de Planos"><LayoutIcon /></NavTool>
            <NavTool aria-label="Publicador"><PublishIcon /></NavTool>
            <Spacer />
            <Panel $w={31} $h={22} aria-label="Opciones del navegador"><Icon w={15} h={12}><path d="M2 1.500h12M2 5.500h12M2 9.500h12" /></Icon><Arrow /></Panel>
          </NavTools>
          <Search><Icon w={14} h={14}><circle cx="6" cy="6" r="4.500" /><path d="m9.500 9.500 4 4" /></Icon><input aria-label="Buscar" placeholder="Buscar Mapa de Proyecto" /></Search>
          <TreeArea>
            <TreeClip>
              <TreeView>
                {tree.map(n => (
                  <Node key={n.text} $level={n.level - 1} $on={n.on}>
                    <Twist>{n.open && <Chevron d="m1.500 3 3.500 4 3.500-4" />}</Twist>{n.icon}<span>{n.text}</span>
                  </Node>
                ))}
              </TreeView>
            </TreeClip>
            <VScroll><Chevron d="m1.500 7 3.500-4 3.500 4" /><Fill $n={57} /><VThumb /><Fill $n={80} /><Chevron d="m1.500 3 3.500 4 3.500-4" /></VScroll>
          </TreeArea>
          <HScroll><Chevron d="M6 2 3 5l3 3" /><HThumb /><Spacer /><Chevron d="m4 2 3 3-3 3" /></HScroll>
          <Actions>
            <button aria-label="Nuevo"><Icon w={14} h={14} color="#a9b6d6"><circle cx="7" cy="7" r="6" /><path d="M7 3.500v7M3.500 7h7" strokeWidth="1.500" /></Icon></button>
            <button aria-label="Definiciones de vista"><Icon w={14} h={14} color="#3f66c4"><path d="M.5 2.500h13v10H.5z" fill="#eef4ff" /><path d="M.5 3h13M3 6.500h1.500M6 6.500h5M3 9.500h1.500M6 9.500h5" strokeWidth="1.500" /></Icon></button>
            <button aria-label="Borrar"><Icon w={14} h={14} color="#f0a59c"><path d="m1 1 12 12M13 1 1 13" strokeWidth="1.600" /></Icon></button>
          </Actions>
          <PropHead><Caret />Propiedades</PropHead>
          <PropRow><Icon w={14} h={12}><path d="m1.500 2 6-1v10l-6-1zM7.500 1l4 1.500v7L7.500 11" /></Icon><span>Perspectiva Cónica</span></PropRow>
          <DefButton>Definiciones</DefButton>
        </Navigator>
      </Workspace>
      <Status>
        <p>Clic en un Elemento o dibuje un Área de Selección. Pulse Ctrl+Mayús para activar o desactivar la selección de elementos/sub-elementos.</p>
        <Brand><Icon w={18} h={14}><path d="M4.500 3.500h12v9h-12z" /><path d="M2.500 10V1.500h11M4.500 5h12" strokeWidth="1.500" /></Icon><span>GRAPHISOFT <span>ID</span></span></Brand>
      </Status>
    </Window>
  );
}
